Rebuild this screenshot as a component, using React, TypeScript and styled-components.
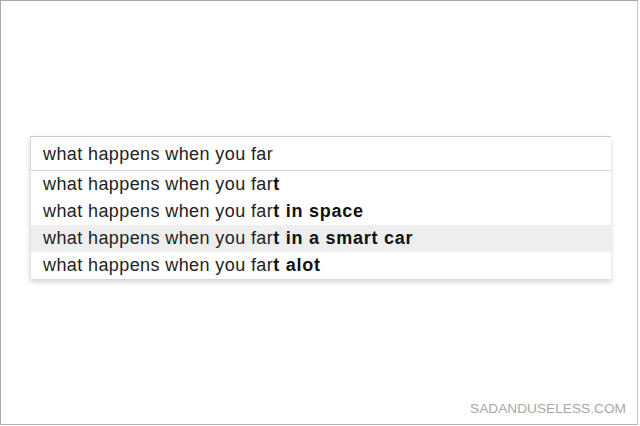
import React from "react";
import styled, { createGlobalStyle } from "styled-components";

const GlobalStyle = createGlobalStyle`
  html, body {
    margin: 0;
    padding: 0;
    background: #ffffff;
  }
  body {
    font-family: "Liberation Sans", Arial, sans-serif;
  }
`;

const Frame = styled.div`
  box-sizing: border-box;
  width: 638px;
  height: 425px;
  border: 1px solid #a9a9a9;
  border-right-color: #c4c4c4;
  border-bottom-color: #b4b4b4;
  display: flex;
  flex-direction: column;
  padding: 135px 27px 0 29px;
`;

const SearchBox = styled.div`
  width: 581px;
  background: #fff;
  box-shadow: 0 3px 5px rgba(0, 0, 0, 0.18);
`;

const Input = styled.div`
  box-sizing: border-box;
  height: 35px;
  border: 1px solid #d9d9d9;
  border-top-color: #c8c8c8;
  border-right: none;
  padding: 2px 0 0 12px;
  display: flex;
  align-items: center;
  font-size: 18px;
  letter-spacing: 0.4px;
  color: #222;
`;

const List = styled.ul`
  list-style: none;
  margin: 0;
  padding: 0;
  border-left: 1px solid #e2e2e2;
`;

const Item = styled.li<{ $active?: boolean }>`
  height: 27px;
  display: flex;
  align-items: center;
  padding-left: 12px;
  font-size: 18px;
  letter-spacing: 0.4px;
  color: #222;
  background: ${(p) => (p.$active ? "#eeeeee" : "#ffffff")};

  b {
    font-weight: bold;
    color: #111;
    letter-spacing: 0.75px;
  }
`;

const Watermark = styled.div`
  margin-top: auto;
  align-self: flex-end;
  margin-bottom: 8px;
  margin-right: -16px;
  font-size: 13.7px;
  color: #a8a8a8;
`;

const query = "what happens when you far";

const suggestions = [
  { rest: "t", bold: "" },
  { rest: "t", bold: " in space" },
  { rest: "t", bold: " in a smart car", active: true },
  { rest: "t", bold: " alot" },
];

export default function App() {
  return (
    <>
      <GlobalStyle />
      <Frame>
        <SearchBox>
          <Input>{query}</Input>
          <List>
            {suggestions.map((s, i) => (
              <Item key={i} $active={s.active}>
                {query}
                <b>
                  {s.rest}
                  {s.bold}
                </b>
              </Item>
            ))}
          </List>
        </SearchBox>
        <Watermark>SADANDUSELESS.COM</Watermark>
      </Frame>
    </>
  );
}
